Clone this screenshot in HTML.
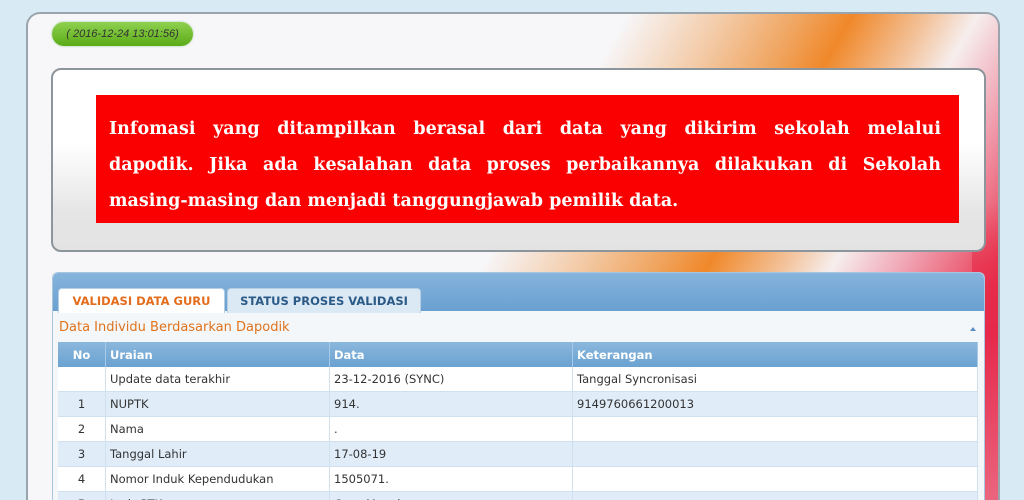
<!DOCTYPE html>
<html><head><style>
html,body{margin:0;width:1024px;height:500px;overflow:hidden}
body{background:#d8ebf4;font-family:"DejaVu Sans","Liberation Sans",sans-serif;position:relative}
.outer{position:absolute;left:26px;top:12px;width:974px;height:488px;border:2px solid #9aa4ad;border-bottom:none;border-radius:14px 14px 0 0;box-sizing:border-box;
background:
linear-gradient(180deg,rgba(230,40,70,0) 0px,rgba(230,40,70,0) 190px,rgba(230,40,70,0.6) 250px,rgba(230,40,75,0.95) 320px,rgba(235,110,135,0.85) 488px) right/26px 100% no-repeat,
linear-gradient(120deg,#f7f6f8 0%,#f7f6f8 48%,#f3c9a4 56%,#f0a45e 62%,#f0882a 66%,#f3c29a 72%,#f6eeee 76%,#f0a0b0 82%,#e8364f 90%);}
.badge{position:absolute;left:52px;top:22px;width:141px;height:24px;border-radius:12px;background:linear-gradient(#8fd150,#5aab16);box-shadow:0 0 2px #9c9;font:italic 11px "Liberation Sans",sans-serif;color:#333;line-height:24px;text-align:center}
.inner{position:absolute;left:51px;top:68px;width:931px;height:180px;border:2px solid #8c959c;border-radius:10px;background:linear-gradient(#fff 0%,#fff 40%,#e5e5e5 80%,#e3e3e3 100%)}
.red{position:absolute;left:96px;top:95px;width:863px;height:128px;background:#fb0000;color:#fff;font:bold 17.5px "DejaVu Serif","Liberation Serif",serif;box-sizing:border-box;padding:16px 18px 0 13px;line-height:36px;overflow:hidden}
.red div{text-align:justify;text-align-last:justify;white-space:nowrap}
.red div.l{text-align-last:left}
.panel{position:absolute;left:52px;top:272px;width:931px;height:228px;border:1px solid #a9c6df;border-bottom:none;border-radius:6px 6px 0 0;background:#f4f7f9;overflow:hidden}
.tabbar{position:absolute;left:0;top:0;width:931px;height:38px;background:linear-gradient(#86b4dc,#6aa0d0);border-radius:5px 5px 0 0}
.tab{position:absolute;top:15px;height:24px;border:1px solid #b6cfe4;border-bottom:none;border-radius:4px 4px 0 0;font:bold 11.5px "DejaVu Sans",sans-serif;line-height:24px;text-align:center}
.t1{left:5px;width:165px;background:#fff;color:#e46d1d}
.t2{left:174px;width:192px;background:#dbe9f5;color:#2b5a86}
.sec{position:absolute;left:6px;top:47px;font:13px "DejaVu Sans",sans-serif;color:#e0731c}
.arrow{position:absolute;right:8px;top:54px;width:0;height:0;border-left:3px solid transparent;border-right:3px solid transparent;border-bottom:4px solid #5b8fc4}
table{position:absolute;left:5px;top:69px;width:920px;border-collapse:collapse;font:11.5px "DejaVu Sans",sans-serif;color:#333}
th{height:25px;background:linear-gradient(#8bb7dc,#6aa2d2);color:#fff;text-align:left;font-weight:bold;padding:0 0 0 4px;border-right:1px solid #a9c9e6}
td{height:24px;padding:0 0 0 4px;border-right:1px solid #cfe0ef;border-bottom:1px solid #cfe0ef}
tr:nth-child(odd) td{background:#e0edf9}
tr:nth-child(even) td{background:#fff}
th:first-child,td:first-child{text-align:center;padding:0}
</style></head><body>
<div class="outer"></div>
<div class="badge">( 2016-12-24 13:01:56)</div>
<div class="inner"></div>
<div class="red"><div>Infomasi yang ditampilkan berasal dari data yang dikirim sekolah melalui</div><div>dapodik. Jika ada kesalahan data proses perbaikannya dilakukan di Sekolah</div><div class="l">masing-masing dan menjadi tanggungjawab pemilik data.</div></div>
<div class="panel">
<div class="tabbar"></div>
<div class="tab t1">VALIDASI DATA GURU</div>
<div class="tab t2">STATUS PROSES VALIDASI</div>
<div class="sec">Data Individu Berdasarkan Dapodik</div>
<div class="arrow"></div>
<table>
<tr><th style="width:47px">No</th><th style="width:219px">Uraian</th><th style="width:238px">Data</th><th>Keterangan</th></tr>
<tr><td></td><td>Update data terakhir</td><td>23-12-2016 (SYNC)</td><td>Tanggal Syncronisasi</td></tr>
<tr><td>1</td><td>NUPTK</td><td>914.</td><td>9149760661200013</td></tr>
<tr><td>2</td><td>Nama</td><td>.</td><td></td></tr>
<tr><td>3</td><td>Tanggal Lahir</td><td>17-08-19</td><td></td></tr>
<tr><td>4</td><td>Nomor Induk Kependudukan</td><td>1505071.</td><td></td></tr>
<tr><td>5</td><td>Jenis PTK</td><td>Guru Mapel</td><td></td></tr>
</table>
</div>
</body></html>
